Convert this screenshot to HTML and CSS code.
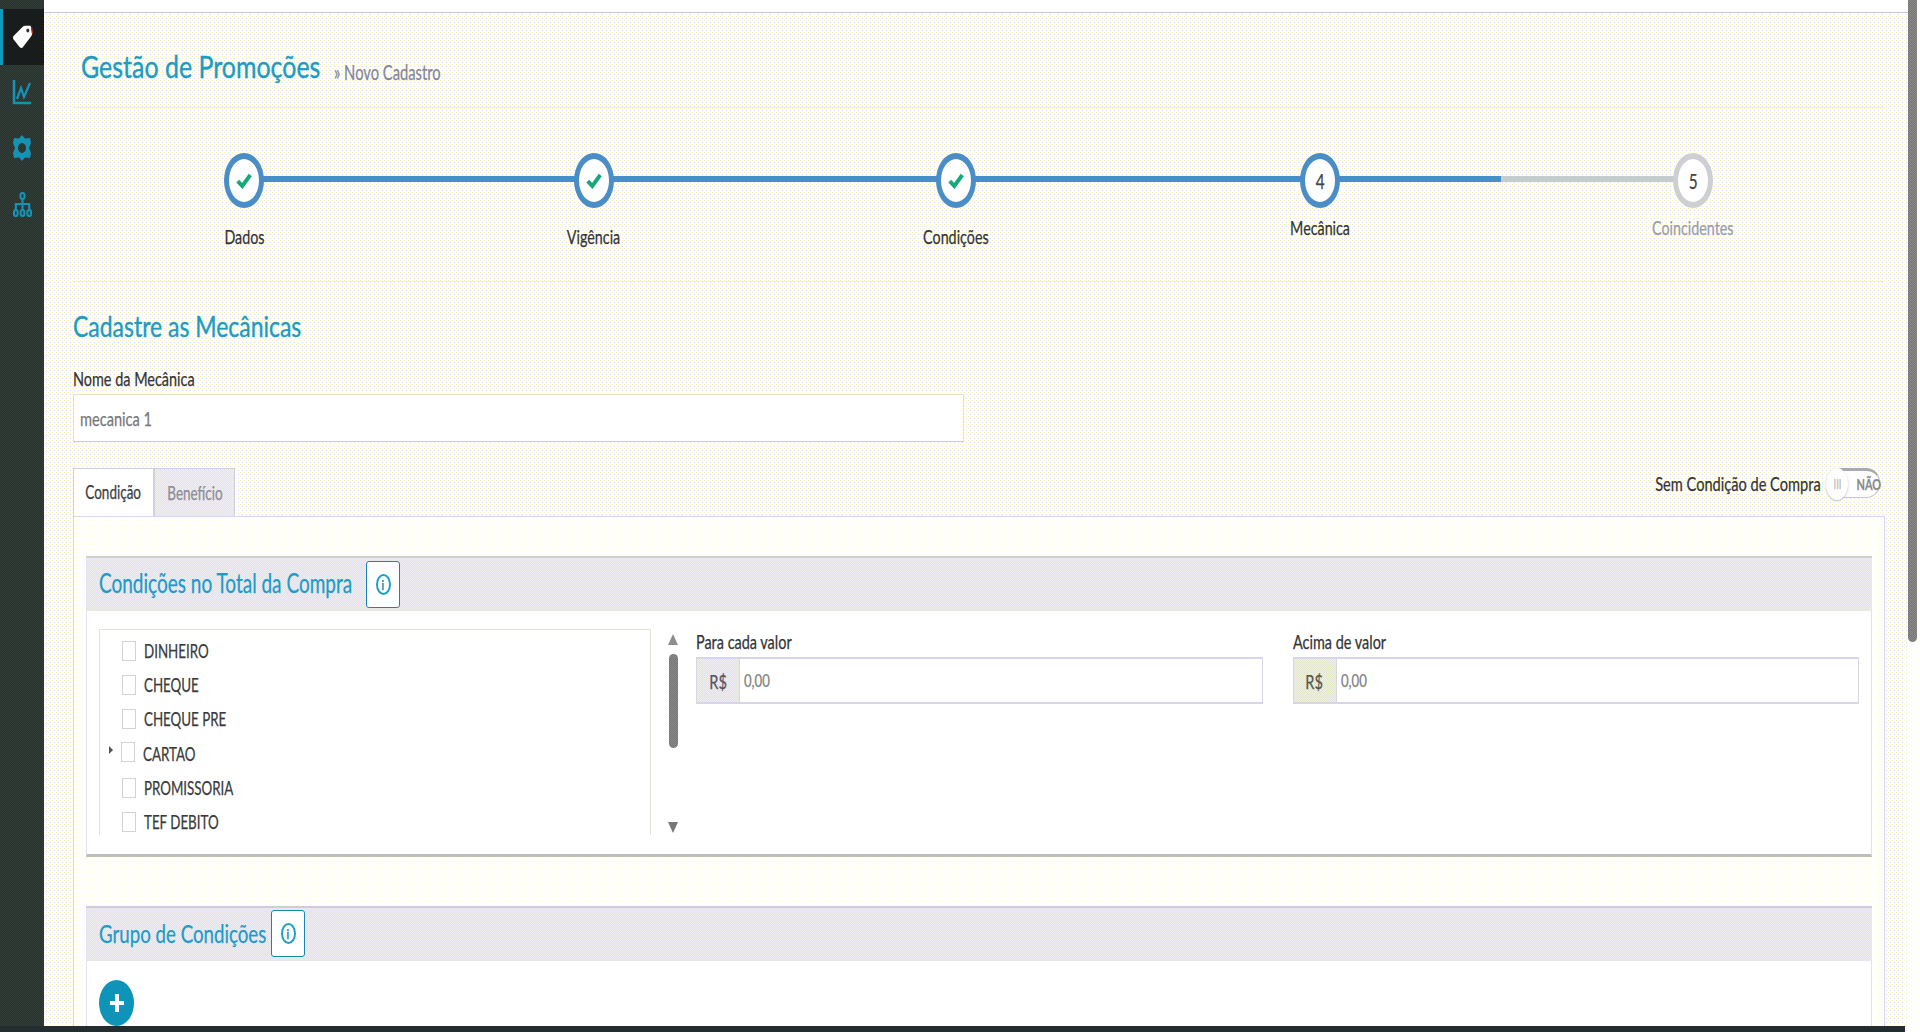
FILE: index.html
```html
<!DOCTYPE html>
<html lang="pt-BR">
<head>
<meta charset="utf-8">
<title>Gestão de Promoções</title>
<link rel="stylesheet" href="styles.css">
</head>
<body>
<div class="app">
  <nav class="sidebar">
    <a class="nav-item active">
      <svg class="ico-tag" viewBox="0 0 21 24" preserveAspectRatio="none"><path d="M1 12.5Q1 11.5 2 10.5L11 1.5Q12 .8 13 .8h5Q19 .8 19 2L20 9Q20 10 19 11.5L11 22Q10 23.5 8 22.5L2 15Q1 14 1 12.5Z" fill="#fff"/><ellipse cx="15.8" cy="5.5" rx="1.5" ry="1.9" fill="#333"/><path d="M19.6 2 20.6 9" stroke="#a33" stroke-width="1.1"/></svg>
    </a>
    <a class="nav-item">
      <svg class="ico-chart" viewBox="0 0 20 27" preserveAspectRatio="none"><path d="M2 1v23h17" fill="none" stroke="#1593b5" stroke-width="2.6"/><path d="M5 20 9 9l3 9 6-14" fill="none" stroke="#1593b5" stroke-width="2.2"/></svg>
    </a>
    <a class="nav-item">
      <svg class="ico-gear" viewBox="0 0 18 26" preserveAspectRatio="none"><path fill-rule="evenodd" d="M9 0l3 3.5 5-.5 1 5-2 5 2 5-1 5-5-.5L9 26l-3-3.5-5 .5-1-5 2-5-2-5 1-5 5 .5ZM9 8a4 5 0 1 0 .01 0Z" fill="#1593b5"/></svg>
    </a>
    <a class="nav-item last">
      <svg class="ico-map" viewBox="0 0 19 25" preserveAspectRatio="none"><g fill="none" stroke="#1593b5" stroke-width="2.1"><rect x="7.5" y="1" width="4" height="6" rx="2"/><rect x="1" y="18" width="3.6" height="6" rx="1.8"/><rect x="7.7" y="18" width="3.6" height="6" rx="1.8"/><rect x="14.4" y="18" width="3.6" height="6" rx="1.8"/><path d="M9.5 7v11M2.8 18v-6h13.4v6"/></g></svg>
    </a>
  </nav>

  <main class="main">
    <div class="topstrip"></div>

    <header class="page-head">
      <h1 class="page-title"><span class="sq">Gestão de Promoções</span></h1>
      <span class="page-sub"><span class="sq">» Novo Cadastro</span></span>
    </header>

    <section class="steps">
      <div class="steps-line"></div>
      <div class="step done"><div class="circle"><svg class="check" viewBox="0 0 14 14" preserveAspectRatio="none"><path d="M1.5 7.5 5.5 11.5 12.5 2.5" fill="none" stroke="#14a87c" stroke-width="3.4"/></svg></div><div class="step-label"><span class="sqc">Dados</span></div></div>
      <div class="step done"><div class="circle"><svg class="check" viewBox="0 0 14 14" preserveAspectRatio="none"><path d="M1.5 7.5 5.5 11.5 12.5 2.5" fill="none" stroke="#14a87c" stroke-width="3.4"/></svg></div><div class="step-label"><span class="sqc">Vigência</span></div></div>
      <div class="step done"><div class="circle"><svg class="check" viewBox="0 0 14 14" preserveAspectRatio="none"><path d="M1.5 7.5 5.5 11.5 12.5 2.5" fill="none" stroke="#14a87c" stroke-width="3.4"/></svg></div><div class="step-label"><span class="sqc">Condições</span></div></div>
      <div class="step current"><div class="circle"><span class="sqc">4</span></div><div class="step-label"><span class="sqc">Mecânica</span></div></div>
      <div class="step pending"><div class="circle"><span class="sqc">5</span></div><div class="step-label"><span class="sqc">Coincidentes</span></div></div>
    </section>

    <h2 class="form-title"><span class="sq">Cadastre as Mecânicas</span></h2>

    <label class="field-label name-label"><span class="sq">Nome da Mecânica</span></label>
    <div class="text-input"><span class="sq">mecanica 1</span></div>

    <div class="tabs-row">
      <div class="tabs">
        <div class="tab active"><span class="sqc">Condição</span></div>
        <div class="tab"><span class="sqc">Benefício</span></div>
      </div>
      <div class="no-cond">
        <span class="no-cond-label"><span class="sqr">Sem Condição de Compra</span></span>
        <div class="toggle"><span class="knob"><span class="sqc">III</span></span><span class="toggle-text"><span class="sqc">NÃO</span></span></div>
      </div>
    </div>

    <div class="tab-panel">
      <section class="card first">
        <div class="card-head">
          <h3 class="card-title total"><span class="sq">Condições no Total da Compra</span></h3>
          <button class="info"><span class="info-ring"><span class="sqc">i</span></span></button>
        </div>
        <div class="card-body">
          <div class="tree">
            <div class="tree-row"><span class="cb"></span><span class="sq">DINHEIRO</span></div>
            <div class="tree-row"><span class="cb"></span><span class="sq">CHEQUE</span></div>
            <div class="tree-row"><span class="cb"></span><span class="sq">CHEQUE PRE</span></div>
            <div class="tree-row parent"><span class="caret"></span><span class="cb"></span><span class="sq">CARTAO</span></div>
            <div class="tree-row"><span class="cb"></span><span class="sq">PROMISSORIA</span></div>
            <div class="tree-row"><span class="cb"></span><span class="sq">TEF DEBITO</span></div>
          </div>
          <div class="vscroll"><span class="arrow up"></span><span class="thumb"></span><span class="arrow down"></span></div>
          <div class="money-fields">
            <div class="money">
              <label class="field-label"><span class="sq">Para cada valor</span></label>
              <div class="group"><span class="addon"><span class="sqc">R$</span></span><span class="group-value"><span class="sq">0,00</span></span></div>
            </div>
            <div class="money">
              <label class="field-label"><span class="sq">Acima de valor</span></label>
              <div class="group"><span class="addon"><span class="sqc">R$</span></span><span class="group-value"><span class="sq">0,00</span></span></div>
            </div>
          </div>
        </div>
      </section>

      <section class="card second">
        <div class="card-head">
          <h3 class="card-title group-title"><span class="sq">Grupo de Condições</span></h3>
          <button class="info"><span class="info-ring"><span class="sqc">i</span></span></button>
        </div>
        <div class="card-body plain">
          <button class="add"><svg class="plus" viewBox="0 0 14 18" preserveAspectRatio="none"><path d="M5 0h4v7h5v4H9v7H5v-7H0V7h5Z" fill="#fff"/></svg></button>
        </div>
      </section>
    </div>
  </main>

  <div class="page-scroll"><span class="page-thumb"></span></div>
  <div class="footer-bar"></div>
</div>
</body>
</html>
```
FILE: styles.css
```css
* { box-sizing: border-box; }
html, body { margin: 0; height: 100%; overflow: hidden; }
body {
  font-family: "Lato", "Liberation Sans", sans-serif;
  color: #3a3a3a;
  background: #fff;
}
h1, h2, h3 { margin: 0; font-weight: 400; }
button { padding: 0; font: inherit; cursor: pointer; }

/* the picture is squeezed horizontally: text is narrowed with a transform */
.sq, .sqc, .sqr {
  display: inline-block;
  white-space: nowrap;
  transform: scaleX(.73);
  -webkit-text-stroke: .25px currentColor;
}
.sq { transform-origin: 0 50%; }
.sqc { transform-origin: 50% 50%; }
.sqr { transform-origin: 100% 50%; }

.app { position: relative; display: flex; width: 1920px; height: 1032px; overflow: hidden; }

/* sidebar */
.sidebar {
  flex: 0 0 44px;
  padding-top: 9px;
  background: repeating-conic-gradient(#25332a 0 25%, #353c3c 0 50%) 0 0 / 2px 2px;
}
.nav-item { display: flex; align-items: center; justify-content: center; height: 55px; }
.nav-item.active { height: 56px; background: #191c1c; border-left: 3px solid #0f9abb; padding-right: 3px; }
.nav-item.last { margin-top: 2px; }
.ico-tag { width: 21px; height: 24px; }
.ico-chart { width: 20px; height: 27px; }
.ico-gear { width: 18px; height: 26px; }
.ico-map { width: 19px; height: 25px; }

/* main */
.main {
  flex: 1;
  height: 1032px;
  overflow: hidden;
  padding: 0 23px 0 29px;
  background:
    radial-gradient(circle at .5px .5px, #fff9b4 .7px, transparent .7px) 0 0 / 4px 4px,
    radial-gradient(circle at 2.5px 2.5px, #dcdcff .7px, transparent .7px) 0 0 / 4px 4px,
    #fff;
}
.topstrip { height: 13px; margin: 0 -23px 0 -29px; background: #fff; border-bottom: 1px solid #c6c8d2; }
.page-head {
  display: flex;
  align-items: flex-start;
  height: 95px;
  padding: 35px 0 0 8px;
  border-bottom: 1px solid #f4f1c4;
}
.page-title { width: 253px; font-size: 31.2px; line-height: 36px; color: #1c9cc0; white-space: nowrap; }
.page-title .sq, .form-title .sq { transform: scaleX(.8); -webkit-text-stroke: .4px currentColor; }
.page-sub { margin-top: 12px; font-size: 20.2px; line-height: 24px; color: #83859a; white-space: nowrap; }

/* steps */
.steps {
  position: relative;
  display: grid;
  grid-template-columns: 342px 358px 366px 362px 384px;
  height: 174px;
  padding-top: 45px;
  border-bottom: 1px solid #f6f3d2;
}
.steps-line {
  position: absolute;
  top: 68px;
  left: 171px;
  width: 1450px;
  height: 6px;
  background: linear-gradient(to right, #4a8dc7 1257px, #c4cdcb 1257px);
}
.step { position: relative; display: flex; flex-direction: column; align-items: center; }
.circle {
  display: flex;
  align-items: center;
  justify-content: center;
  width: 40px;
  height: 55px;
  border: 6px solid #4a8dc7;
  border-left-width: 5px;
  border-right-width: 5px;
  border-radius: 50%;
  background: #fff;
  font-size: 21px;
  color: #444;
}
.pending .circle { border-color: #cdcfd2; }
.check { width: 16px; height: 17px; }
.step-label { margin-top: 18px; font-size: 19.6px; line-height: 22px; color: #333; white-space: nowrap; }
.current .step-label, .pending .step-label { margin-top: 9px; }
.pending .step-label { color: #9a9ca8; }

/* form */
.form-title { margin-top: 24px; font-size: 28.7px; line-height: 40px; color: #1c9cc0; white-space: nowrap; }
.field-label { display: block; font-size: 19.8px; line-height: 22px; color: #333; white-space: nowrap; }
.name-label { margin-top: 21px; }
.text-input {
  display: flex;
  align-items: center;
  width: 891px;
  height: 48px;
  margin-top: 5px;
  padding-left: 6px;
  background: #fff;
  border: 1px solid #e4e2c4;
  border-bottom-color: #d0d0d0;
  font-size: 20px;
  color: #777;
}

/* tabs */
.tabs-row { display: flex; justify-content: space-between; align-items: flex-start; height: 48px; margin-top: 26px; }
.tabs { display: flex; }
.tab {
  display: flex;
  align-items: center;
  justify-content: center;
  width: 81px;
  height: 48px;
  border: 1px solid #cfd0de;
  border-bottom: 0;
  font-size: 18.5px;
  background: repeating-conic-gradient(#e6e6d4 0 25%, #eeeef4 0 50%) 0 0 / 2px 2px;
  color: #8d8d8d;
}
.tab.active { background: #fff; color: #3d3d3d; padding-bottom: 2px; }
.no-cond { display: flex; align-items: center; margin-right: 5px; }
.no-cond-label {
  display: flex;
  justify-content: flex-end;
  width: 167px;
  margin-right: 6px;
  font-size: 20px;
  color: #333;
  white-space: nowrap;
}
.toggle {
  position: relative;
  display: flex;
  align-items: center;
  justify-content: flex-end;
  width: 53px;
  height: 30px;
  padding-right: 3px;
  border: 1px solid #c9c9d2;
  border-top: 3px solid #a9a9b0;
  border-radius: 14px;
  background: #fff;
}
.toggle-text { width: 24px; font-size: 15px; font-weight: 700; color: #8a8a8a; text-align: center; }
.knob {
  position: absolute;
  left: -2px;
  top: -3px;
  display: flex;
  align-items: center;
  justify-content: center;
  width: 22px;
  height: 32px;
  border-radius: 50%;
  background: #fff;
  box-shadow: 0 1px 2px #b9b9c6;
  font-size: 13px;
  color: #bbb;
}

.tab-panel {
  height: 700px;
  margin-top: 0;
  padding: 39px 12px 0;
  border: 1px solid #d8d8ea;
  background:
    radial-gradient(circle at .5px .5px, #fffbd0 .7px, transparent .7px) 0 0 / 4px 4px,
    #fff;
}
.card-head {
  display: flex;
  align-items: center;
  height: 55px;
  padding-left: 13px;
  border-top: 2px solid #cfcfcf;
  background: repeating-conic-gradient(#e5e5cf 0 25%, #ecedf5 0 50%) 0 0 / 2px 2px;
}
.card-title { padding-bottom: 4px; font-size: 26px; color: #1c9cc0; white-space: nowrap; }
.total { width: 267px; }
.group-title { width: 172px; font-size: 25.6px; }
.info {
  display: flex;
  align-items: center;
  justify-content: center;
  height: 47px;
  width: 34px;
  border: 1px solid #1786ab;
  border-radius: 3px;
  background: #fff;
}
.info-ring {
  display: flex;
  align-items: center;
  justify-content: center;
  width: 15px;
  height: 21px;
  border: 2px solid #1f9fc4;
  border-radius: 50%;
  font-size: 14px;
  font-weight: 700;
  color: #1786ab;
}
.second .info { margin-top: -2px; }
.card-body {
  display: flex;
  height: 246px;
  padding: 18px 12px 0 12px;
  border-left: 1px solid #e2e2ea;
  border-right: 1px solid #e2e2ea;
  border-bottom: 3px solid #bdbdbd;
  background: #fff;
}
.tree {
  flex: 0 0 552px;
  height: 206px;
  overflow: hidden;
  padding: 4px 0 0 22px;
  border: 1px solid #e3e3d6;
  border-bottom: 0;
  font-size: 18.3px;
  color: #3a3a3a;
}
.tree-row { position: relative; display: flex; align-items: center; height: 34.2px; white-space: nowrap; }
.cb { flex: 0 0 14px; height: 20px; margin-right: 8px; background: #fff; border: 1px solid #d3d3d3; }
.parent { margin-left: -1px; }
.parent .cb { margin-top: -4px; }
.caret {
  position: absolute;
  left: -12px;
  top: 9px;
  border-left: 4px solid #555;
  border-top: 4px solid transparent;
  border-bottom: 4px solid transparent;
}
.vscroll {
  display: flex;
  flex-direction: column;
  align-items: center;
  flex: 0 0 10px;
  height: 206px;
  margin: 0 18px 0 17px;
  padding-top: 5px;
}
.thumb {
  width: 9px;
  height: 94px;
  margin: 9px 0 74px;
  border-radius: 5px;
  background: repeating-conic-gradient(#76767a 0 25%, #8a8a84 0 50%) 0 0 / 2px 2px;
}
.arrow { border-left: 5px solid transparent; border-right: 5px solid transparent; }
.arrow.up { border-bottom: 11px solid #8d8d8d; }
.arrow.down { border-top: 11px solid #777; }
.money-fields { display: flex; gap: 30px; flex: 1; }
.money { flex: 1; margin-top: 1px; }
.group {
  display: flex;
  height: 47px;
  margin-top: 5px;
  border: 1px solid #d6d6e6;
  border-top-width: 2px;
  border-bottom-width: 2px;
  background: #fff;
}
.addon {
  display: flex;
  align-items: center;
  justify-content: center;
  flex: 0 0 43px;
  border-right: 1px solid #d6d6e6;
  background: repeating-conic-gradient(#e5e5cf 0 25%, #ecedf5 0 50%) 0 0 / 2px 2px;
  font-size: 20px;
  color: #555;
}
.group-value { display: flex; align-items: center; padding: 0 0 2px 4px; font-size: 18px; color: #808080; }
.second { margin-top: 49px; }
.plain { height: 120px; padding-top: 19px; border-bottom: 0; }
.add {
  display: flex;
  align-items: center;
  justify-content: center;
  width: 35px;
  height: 46px;
  border: 0;
  border-radius: 50%;
  background: #0f93b9;
}
.plus { width: 14px; height: 18px; }

/* page scrollbar and footer */
.page-scroll { flex: 0 0 12px; background: #fff; }
.page-thumb {
  display: block;
  width: 9px;
  height: 642px;
  border-radius: 0 0 5px 5px;
  background: repeating-conic-gradient(#75757a 0 25%, #8c8c84 0 50%) 0 0 / 2px 2px;
}
.footer-bar {
  position: absolute;
  left: 0;
  right: 15px;
  bottom: 0;
  height: 6px;
  background: #232c2e;
}
```
